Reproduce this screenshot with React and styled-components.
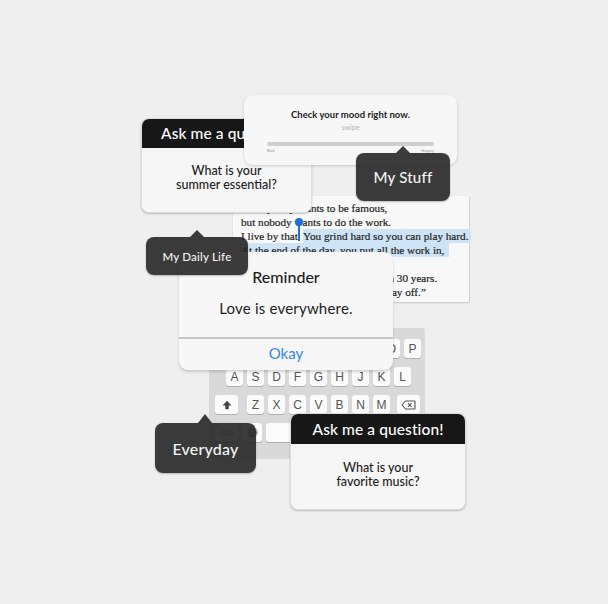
import React from "react";
import styled, { createGlobalStyle } from "styled-components";

const Global = createGlobalStyle`
  html, body { margin: 0; padding: 0; background: #efefef; }
  * { box-sizing: border-box; }
`;

const SANS = `Lato, "Noto Sans", sans-serif`;

const Canvas = styled.div`
  position: relative;
  width: 608px;
  height: 604px;
  overflow: hidden;
  background: #efefef;
  font-family: ${SANS};
`;

/* ---------- Ask card ---------- */
const AskCard = styled.div`
  position: absolute;
  left: ${(p) => p.$x}px;
  top: ${(p) => p.$y}px;
  width: ${(p) => p.$w}px;
  height: ${(p) => p.$h}px;
  z-index: ${(p) => p.$z};
  display: flex;
  flex-direction: column;
  background: #f6f6f6;
  border-radius: 8px;
  overflow: hidden;
  border: 1px solid #dcdcdc;
  box-shadow: 0 1px 2px rgba(0, 0, 0, 0.22);
`;
const AskHeader = styled.div`
  height: ${(p) => p.$h}px;
  flex: none;
  background: #171717;
  color: #fff;
  font-size: 15.5px;
  font-weight: 500;
  display: flex;
  align-items: center;
  justify-content: center;
  letter-spacing: 0.1px;
  white-space: nowrap;
  padding-bottom: 1px;
`;
const AskBody = styled.div`
  flex: 1;
  display: flex;
  align-items: center;
  justify-content: center;
  text-align: center;
  color: #1d1d1d;
  font-size: 12.5px;
  line-height: 14px;
  font-weight: 500;
  padding-bottom: ${(p) => p.$pb}px;
`;

/* ---------- Mood card ---------- */
const MoodCard = styled.div`
  position: absolute;
  left: 244px;
  top: 95px;
  width: 213px;
  height: 70px;
  z-index: 4;
  background: #f7f7f7;
  border-radius: 9px;
  box-shadow: 0 1px 3px rgba(0, 0, 0, 0.18);
  display: flex;
  flex-direction: column;
  align-items: center;
  padding: 14px 23px 0;
`;
const MoodTitle = styled.div`
  font-size: 9.5px;
  font-weight: 700;
  color: #222;
  line-height: 12px;
`;
const MoodHint = styled.div`
  font-size: 7px;
  color: #b3b3b3;
  margin-top: 2px;
  line-height: 9px;
`;
const Track = styled.div`
  width: 100%;
  height: 4px;
  border-radius: 2px;
  background: #cfcfcf;
  margin-top: 10px;
`;
const TrackLabels = styled.div`
  width: 100%;
  display: flex;
  justify-content: space-between;
  font-size: 4.5px;
  color: #9a9a9a;
  margin-top: 2px;
`;

/* ---------- Bubble ---------- */
const Bubble = styled.div`
  position: absolute;
  left: ${(p) => p.$x}px;
  top: ${(p) => p.$y}px;
  width: ${(p) => p.$w}px;
  height: ${(p) => p.$h}px;
  z-index: ${(p) => p.$z};
  background: rgba(38, 38, 38, 0.9);
  border-radius: 8px;
  display: flex;
  align-items: center;
  justify-content: center;
  color: #f4f4f4;
  font-size: ${(p) => p.$fs}px;
  font-weight: 500;
  letter-spacing: 0.2px;
  white-space: nowrap;
  box-shadow: 0 1px 2px rgba(0, 0, 0, 0.25);
  &::before {
    content: "";
    position: absolute;
    left: ${(p) => p.$ax - 7}px;
    top: -${(p) => p.$ah}px;
    border-left: 7px solid transparent;
    border-right: 7px solid transparent;
    border-bottom: ${(p) => p.$ah}px solid rgba(38, 38, 38, 0.9);
  }
`;

/* ---------- Text panel ---------- */
const TextPanel = styled.div`
  position: absolute;
  left: 233px;
  top: 196px;
  width: 236px;
  height: 106px;
  z-index: 2;
  background: #f8f8f8;
  box-shadow: 1px 1px 0 #cfcfcf, 0 1px 2px rgba(0, 0, 0, 0.12);
  padding: 5px 0 0 8px;
  font-family: "Liberation Serif", "Times New Roman", serif;
  font-size: 11.2px;
  line-height: 14px;
  color: #242424;
  -webkit-text-stroke: 0.2px #242424;
`;
const TextLine = styled.div`
  white-space: nowrap;
  height: 14px;
`;
const Sel = styled.span`
  background: #cfe3f7;
  padding: 1px ${(p) => p.$pr || 0}px 1px 0;
  margin-left: ${(p) => p.$ml || 0}px;
  padding-left: ${(p) => p.$pl || 0}px;
`;
const Handle = styled.div`
  position: absolute;
  left: 65px;
  top: 25px;
  width: 2px;
  height: 20px;
  background: #1f72dd;
  &::before {
    content: "";
    position: absolute;
    left: -3px;
    top: -3px;
    width: 8px;
    height: 8px;
    border-radius: 50%;
    background: #1f72dd;
  }
`;

/* ---------- Reminder ---------- */
const Reminder = styled.div`
  position: absolute;
  left: 179px;
  top: 252px;
  width: 214px;
  height: 118px;
  z-index: 6;
  background: #f7f7f7;
  border-radius: 9px;
  box-shadow: 0 2px 3px rgba(0, 0, 0, 0.16);
  display: flex;
  flex-direction: column;
  overflow: hidden;
`;
const ReminderBody = styled.div`
  height: 87px;
  display: flex;
  flex-direction: column;
  align-items: center;
  padding-top: 15px;
  border-bottom: 2px solid #c6c6c6;
`;
const ReminderTitle = styled.div`
  font-size: 16px;
  font-weight: 500;
  color: #1b1b1b;
  line-height: 20px;
`;
const ReminderMsg = styled.div`
  font-size: 15px;
  color: #222;
  margin-top: 12px;
  line-height: 18px;
  letter-spacing: 0.2px;
`;
const OkayBtn = styled.div`
  flex: 1;
  display: flex;
  align-items: center;
  justify-content: center;
  color: #3a86e2;
  font-size: 15px;
  padding-bottom: 3px;
`;

/* ---------- Keyboard ---------- */
const Keyboard = styled.div`
  position: absolute;
  left: 209px;
  top: 328px;
  width: 216px;
  height: 131px;
  z-index: 1;
  background: #d9d9d9;
  border-radius: 3px;
  padding: 11px 5px 0 6px;
  display: flex;
  flex-direction: column;
  gap: 9px;
`;
const KeyRow = styled.div`
  display: flex;
  gap: 4px;
  padding-left: ${(p) => p.$pl || 0}px;
`;
const Key = styled.div`
  width: ${(p) => p.$w || 17}px;
  height: 19px;
  margin-left: ${(p) => p.$ml || 0}px;
  margin-right: ${(p) => p.$mr || 0}px;
  flex: none;
  background: #fbfbfb;
  border-radius: 3px;
  box-shadow: 0 1px 0 #aeaeae;
  display: flex;
  align-items: center;
  justify-content: center;
  font-family: "Liberation Sans", Arial, sans-serif;
  font-size: ${(p) => p.$fs || 12}px;
  color: ${(p) => p.$c || "#555"};
`;

const ShiftIcon = () => (
  <svg width="10" height="10" viewBox="0 0 10 10">
    <path d="M5 0.8 L9.4 5.4 H6.7 V9.2 H3.3 V5.4 H0.6 Z" fill="#444" />
  </svg>
);
const BackIcon = () => (
  <svg width="15" height="10" viewBox="0 0 15 10">
    <path
      d="M4.5 1 H13.5 Q14 1 14 1.5 V8.5 Q14 9 13.5 9 H4.5 L1 5 Z"
      fill="none"
      stroke="#555"
      strokeWidth="1.1"
      strokeLinejoin="round"
    />
    <path d="M7 3.2 L10.6 6.8 M10.6 3.2 L7 6.8" stroke="#555" strokeWidth="1.1" />
  </svg>
);
const GlobeIcon = () => (
  <svg width="11" height="11" viewBox="0 0 12 12">
    <g fill="none" stroke="#666" strokeWidth="0.9">
      <circle cx="6" cy="6" r="5" />
      <ellipse cx="6" cy="6" rx="2.2" ry="5" />
      <path d="M1 6 H11 M2 3.4 H10 M2 8.6 H10" />
    </g>
  </svg>
);

const row1 = "QWERTYUIOP".split("");
const row2 = "ASDFGHJKL".split("");
const row3 = "ZXCVBNM".split("");

export default function App() {
  return (
    <>
      <Global />
      <Canvas>
        <Keyboard>
          <KeyRow>
            {row1.map((k) => (
              <Key key={k}>{k}</Key>
            ))}
          </KeyRow>
          <KeyRow $pl={11}>
            {row2.map((k) => (
              <Key key={k}>{k}</Key>
            ))}
          </KeyRow>
          <KeyRow>
            <Key $w={23} $mr={5}>
              <ShiftIcon />
            </Key>
            {row3.map((k) => (
              <Key key={k}>{k}</Key>
            ))}
            <Key $w={23} $ml={3}>
              <BackIcon />
            </Key>
          </KeyRow>
          <KeyRow>
            <Key $w={23} $fs={8} $c="#666">
              123
            </Key>
            <Key $w={20}>
              <GlobeIcon />
            </Key>
            <Key $w={85} />
            <Key $w={64} />
          </KeyRow>
        </Keyboard>

        <TextPanel>
          <TextLine>“Everybody wants to be famous,</TextLine>
          <TextLine>but nobody wants to do the work.</TextLine>
          <TextLine>
            I live by that. <Sel $pr={3}>You grind hard so you can play hard.</Sel>
          </TextLine>
          <TextLine>
            <Sel $ml={-1} $pl={1} $pr={5}>
              At the end of the day, you put all the work in,
            </Sel>
          </TextLine>
          <TextLine>and it’ll pay off.</TextLine>
          <TextLine>It could be in a year, it could be in 30 years.</TextLine>
          <TextLine>Eventually, your hard work will pay off.”</TextLine>
          <Handle />
        </TextPanel>

        <AskCard $x={141} $y={118} $w={171} $h={95} $z={3}>
          <AskHeader $h={29}>Ask me a question!</AskHeader>
          <AskBody $pb={5}>
            What is your
            <br />
            summer essential?
          </AskBody>
        </AskCard>

        <MoodCard>
          <MoodTitle>Check your mood right now.</MoodTitle>
          <MoodHint>swipe</MoodHint>
          <Track />
          <TrackLabels>
            <span>Bad</span>
            <span>Happy</span>
          </TrackLabels>
        </MoodCard>

        <Bubble $x={356} $y={153} $w={94} $h={48} $z={5} $fs={15} $ax={47} $ah={7}>
          My Stuff
        </Bubble>

        <Reminder>
          <ReminderBody>
            <ReminderTitle>Reminder</ReminderTitle>
            <ReminderMsg>Love is everywhere.</ReminderMsg>
          </ReminderBody>
          <OkayBtn>Okay</OkayBtn>
        </Reminder>

        <Bubble $x={146} $y={237} $w={102} $h={38} $z={7} $fs={11.5} $ax={51} $ah={7}>
          My Daily Life
        </Bubble>

        <Bubble $x={155} $y={423} $w={101} $h={50} $z={7} $fs={16} $ax={50} $ah={9}>
          Everyday
        </Bubble>

        <AskCard $x={290} $y={413} $w={176} $h={97} $z={8}>
          <AskHeader $h={30}>Ask me a question!</AskHeader>
          <AskBody $pb={4}>
            What is your
            <br />
            favorite music?
          </AskBody>
        </AskCard>
      </Canvas>
    </>
  );
}
